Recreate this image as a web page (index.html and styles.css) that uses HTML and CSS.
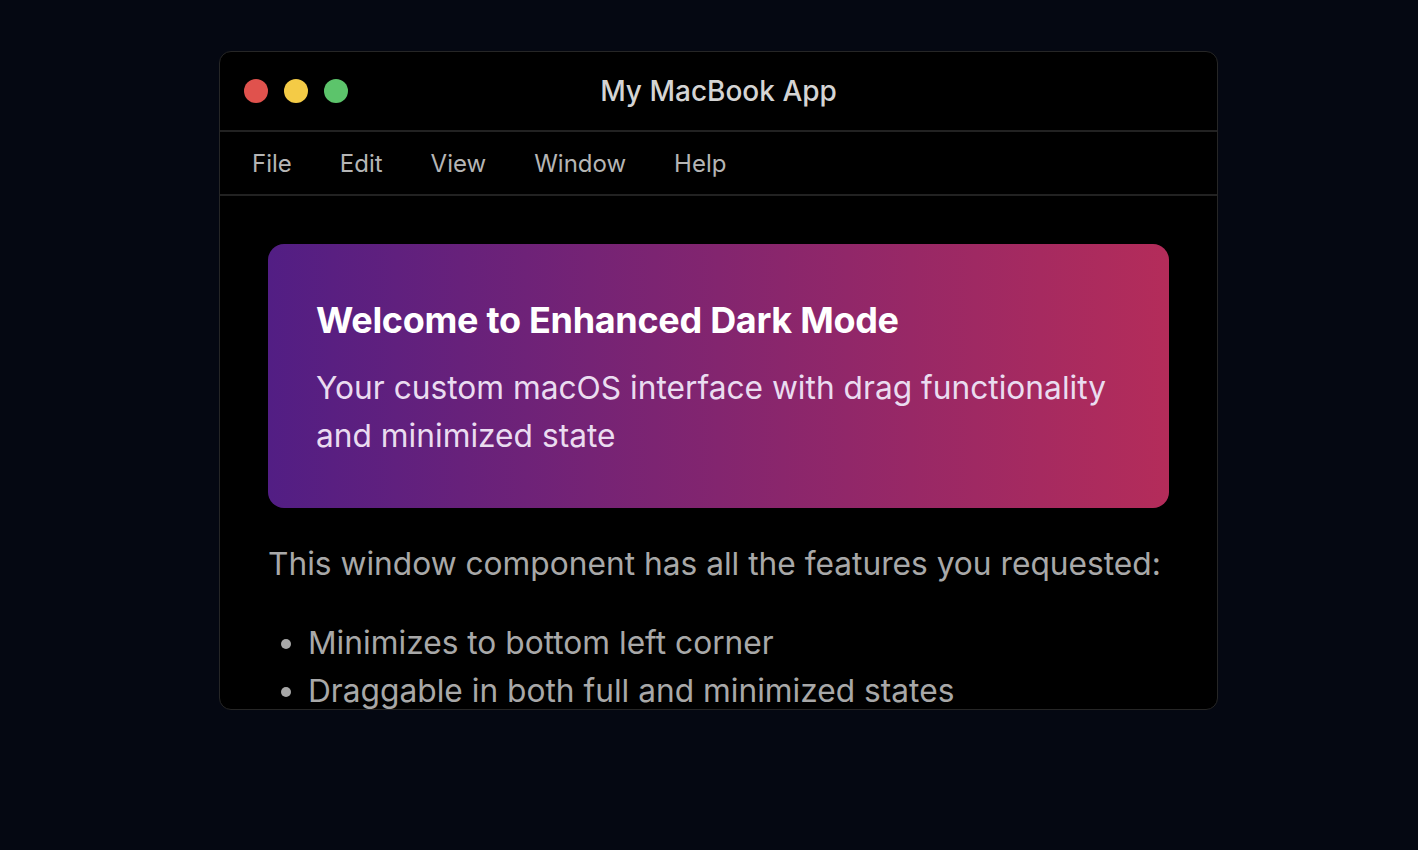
FILE: index.html
```html
<!DOCTYPE html>
<html lang="en">
<head>
<meta charset="utf-8">
<title>My MacBook App</title>
<link rel="stylesheet" href="styles.css">
</head>
<body>
<div class="desktop">
  <div class="window">
    <div class="titlebar">
      <div class="lights">
        <span class="light red"></span>
        <span class="light yellow"></span>
        <span class="light green"></span>
      </div>
      <div class="title">My MacBook App</div>
    </div>
    <nav class="menubar">
      <span class="menu-item">File</span>
      <span class="menu-item">Edit</span>
      <span class="menu-item">View</span>
      <span class="menu-item">Window</span>
      <span class="menu-item">Help</span>
    </nav>
    <div class="content">
      <div class="hero">
        <h1 class="hero-title">Welcome to Enhanced Dark Mode</h1>
        <p class="hero-sub">Your custom macOS interface with drag functionality and minimized state</p>
      </div>
      <p class="intro">This window component has all the features you requested:</p>
      <ul class="features">
        <li>Minimizes to bottom left corner</li>
        <li>Draggable in both full and minimized states</li>
      </ul>
    </div>
  </div>
</div>
</body>
</html>
```
FILE: styles.css
```css
* { box-sizing: border-box; }
html, body { margin: 0; padding: 0; }
body {
  background: #050812;
  font-family: Inter, "Noto Sans", sans-serif;
  width: 1418px;
  height: 850px;
  overflow: hidden;
}
.desktop {
  position: relative;
  width: 1418px;
  height: 850px;
}
.window {
  position: absolute;
  left: 219px;
  top: 51px;
  width: 999px;
  height: 659px;
  background: #000;
  border: 1px solid #262626;
  border-radius: 12px;
  overflow: hidden;
  display: flex;
  flex-direction: column;
}
.titlebar {
  position: relative;
  height: 80px;
  flex: none;
  display: flex;
  align-items: center;
  padding-left: 24px;
  border-bottom: 2px solid #222;
}
.lights { display: flex; gap: 16px; }
.light {
  width: 24px;
  height: 24px;
  border-radius: 50%;
  display: block;
}
.red { background: #e0524d; }
.yellow { background: #f4cb46; }
.green { background: #5cc46b; }
.title {
  position: absolute;
  left: 0;
  right: 0;
  text-align: center;
  color: #d4d4d4;
  font-size: 28px;
  font-weight: 500;
  pointer-events: none;
}
.menubar {
  flex: none;
  height: 64px;
  display: flex;
  align-items: center;
  gap: 48px;
  padding-left: 32px;
  border-bottom: 2px solid #222;
}
.menu-item {
  color: #b5b5b5;
  font-size: 24px;
}
.content {
  flex: 1;
  overflow: hidden;
  padding: 48px;
}
.hero {
  border-radius: 16px;
  padding: 48px;
  background: linear-gradient(90deg, #521e84 0%, #b42c5a 100%);
}
.hero-title {
  margin: 0 0 16px;
  color: #fff;
  font-size: 36px;
  font-weight: 700;
  line-height: 56px;
  letter-spacing: -0.3px;
}
.hero-sub {
  margin: 0;
  color: #eadcf0;
  font-size: 31.7px;
  line-height: 48px;
}
.intro {
  margin: 32px 0 31px;
  color: #a8a8a8;
  font-size: 31.7px;
  line-height: 48px;
  white-space: nowrap;
}
.features {
  margin: 0;
  padding-left: 40px;
  color: #a8a8a8;
  font-size: 31.7px;
  line-height: 48px;
}
```
